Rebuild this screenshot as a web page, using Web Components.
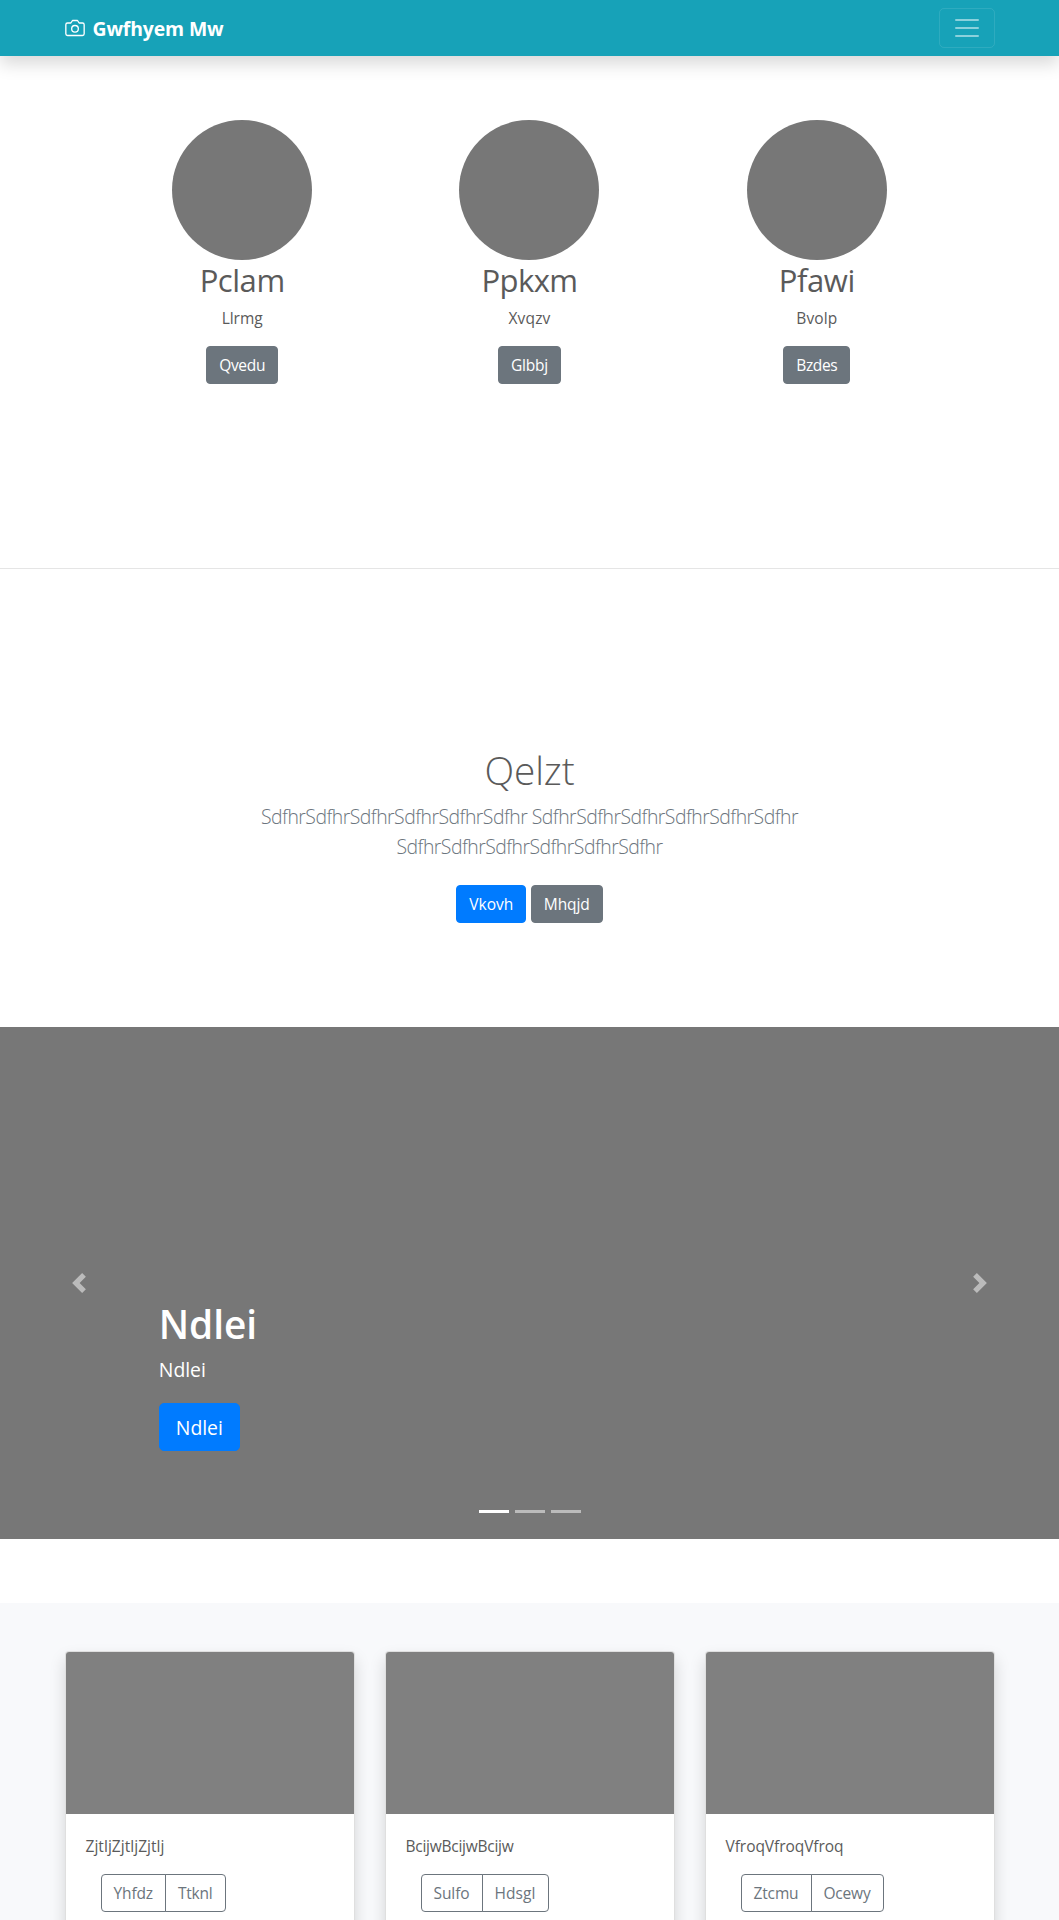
<!DOCTYPE html>
<html lang="en">
<head>
<meta charset="utf-8">
<meta name="viewport" content="width=device-width, initial-scale=1">
<title>Gwfhyem Mw</title>
<style>
html{overflow:hidden}
body{margin:0;height:1920px;overflow:hidden;background:#fff;color:#5a5a5a;font:400 16px/24px "Open Sans","Noto Sans",sans-serif}
</style>
</head>
<body>
<app-page></app-page>
<script>
const define = (name, html, setup) => {
  const template = document.createElement('template');
  template.innerHTML = html.trim();
  customElements.define(name, class extends HTMLElement {
    connectedCallback() {
      if (this.shadowRoot) return;
      this.attachShadow({ mode: 'open' }).append(template.content.cloneNode(true));
      if (setup) setup(this, this.shadowRoot);
    }
  });
};

/* A single line of text tracked to the advance width given in "w"; "drop" lowers its baseline slightly. */
define('fit-text', `<style>
:host{display:inline-block;white-space:nowrap;font-size:.97em;line-height:inherit;text-align:left;vertical-align:-.02em}
:host([drop]){vertical-align:-1.3px}
span{display:inline-block}
</style><span><slot></slot></span>`, (host, root) => {
  const span = root.querySelector('span');
  const w = +host.getAttribute('w');
  const natural = span.getBoundingClientRect().width;
  span.style.letterSpacing = (w - natural) / host.textContent.length + 'px';
});

define('ui-button', `
<style>
:host{display:inline-block;box-sizing:border-box;vertical-align:middle;height:38px;padding:6px 12px;border:1px solid #6c757d;border-radius:4px;background:#6c757d;color:#fff;font-size:16px;line-height:24px;white-space:nowrap}
:host([kind=primary]){background:#007bff;border-color:#007bff}
:host([kind=outline]){background:transparent;color:#6c757d}
:host([size=lg]){height:48px;padding:8px 16px;font-size:20px;line-height:30px;border-radius:5px}
:host([side=left]){border-radius:4px 0 0 4px}
:host([side=right]){border-radius:0 4px 4px 0;margin-left:-1px}
</style><slot></slot>`);

define('nav-bar', `
<style>
:host{display:block;position:relative;background:#17a2b8;height:56px;box-shadow:0 8px 16px rgba(0,0,0,.15)}
.in{box-sizing:border-box;width:960px;height:56px;margin:auto;padding:0 15px;display:flex;align-items:center;justify-content:space-between}
.brand{display:flex;align-items:center;color:#fff;font-size:20px;font-weight:700;line-height:30px}
.brand svg{margin-right:8px}
.brand fit-text{margin-top:2px}
.toggle{box-sizing:border-box;width:56px;height:40px;border:1px solid rgba(255,255,255,.1);border-radius:5px;padding:4px 12px}
svg{display:block}
</style>
<div class="in">
<div class="brand"><svg width="20" height="20" viewBox="0 0 24 24" fill="none" stroke="#fff" stroke-width="1.6" stroke-linecap="round" stroke-linejoin="round"><path d="M23 19a2 2 0 0 1-2 2H3a2 2 0 0 1-2-2V8a2 2 0 0 1 2-2h4l2-3h6l2 3h4a2 2 0 0 1 2 2z"/><circle cx="12" cy="13" r="4"/></svg><fit-text w="131">Gwfhyem Mw</fit-text></div>
<div class="toggle"><svg width="30" height="30" viewBox="0 0 30 30"><path stroke="rgba(255,255,255,.5)" stroke-width="2" stroke-linecap="round" d="M4 7h22M4 15h22M4 23h22"/></svg></div>
</div>`);

define('profile-item', `
<style>
:host{display:block;flex:1;text-align:center}
.dot{width:140px;height:140px;border-radius:50%;background:#777;margin:auto}
.h{font-size:32px;line-height:38.4px;margin-bottom:7.5px;height:38.4px;font-weight:400}
.p{height:24px;margin-bottom:16px}
</style>
<div class="dot"></div><div class="h"><slot name="title"></slot></div><div class="p"><slot name="text"></slot></div><slot></slot>`);

define('intro-block', `
<style>
:host{display:block;text-align:center;font-weight:300}
.h{font-size:40px;line-height:48px;height:48px;margin-bottom:8px}
.lead{font-size:20px;line-height:30px;color:#6c757d;margin-bottom:24px}
.line{height:30px}
.acts{display:flex;justify-content:center;gap:4.5px;font-weight:400}
</style>
<div class="h"><fit-text w="90">Qelzt</fit-text></div>
<div class="lead"><div class="line"><fit-text drop w="537">SdfhrSdfhrSdfhrSdfhrSdfhrSdfhr SdfhrSdfhrSdfhrSdfhrSdfhrSdfhr</fit-text></div><div class="line"><fit-text drop w="266">SdfhrSdfhrSdfhrSdfhrSdfhrSdfhr</fit-text></div></div>
<div class="acts"><ui-button kind="primary"><fit-text w="44">Vkovh</fit-text></ui-button><ui-button><fit-text w="46">Mhqjd</fit-text></ui-button></div>`);

define('hero-carousel', `
<style>
:host{display:grid;grid-template-columns:15% 1fr 15%;height:512px;background:#777;color:#fff}
.ctl{display:flex;align-items:center;justify-content:center;opacity:.5}
.main{display:flex;flex-direction:column;align-items:flex-start;justify-content:flex-end}
.h{font-size:40px;line-height:48px;height:48px;font-weight:600;margin-bottom:8px}
.p{font-size:20px;line-height:30px;height:30px;margin-bottom:18.6px}
.dots{align-self:center;display:flex;gap:6px;margin:59px 0 26px}
.dots i{width:30px;height:3px;background:#fff;opacity:.5}
.dots i:first-child{opacity:1}
</style>
<div class="ctl"><svg width="20" height="20" viewBox="0 0 8 8" fill="#fff"><path d="M5.25 0l-4 4 4 4 1.5-1.5-2.5-2.5 2.5-2.5-1.5-1.5z"/></svg></div>
<div class="main"><div class="h"><fit-text drop w="98">Ndlei</fit-text></div><div class="p"><fit-text w="47">Ndlei</fit-text></div><ui-button kind="primary" size="lg"><fit-text drop w="47">Ndlei</fit-text></ui-button><div class="dots"><i></i><i></i><i></i></div></div>
<div class="ctl"><svg width="20" height="20" viewBox="0 0 8 8" fill="#fff"><path d="M2.75 0l-1.5 1.5 2.5 2.5-2.5 2.5 1.5 1.5 4-4-4-4z"/></svg></div>`);

define('album-card', `
<style>
:host{display:block;box-sizing:border-box;flex:1;height:320px;background:#fff;border:1px solid rgba(0,0,0,.125);border-radius:4px;box-shadow:0 8px 16px rgba(0,0,0,.15)}
.pic{height:162px;background:#808080;border-radius:3px 3px 0 0}
.body{padding:20px}
.t{height:24px;margin-bottom:16px}
.g{display:flex;padding-left:15px}
</style>
<div class="pic"></div><div class="body"><div class="t"><slot name="text"></slot></div><div class="g"><slot></slot></div></div>`);

define('app-page', `
<style>
:host{display:block}
.people{display:flex;width:862px;height:320px;margin:64px auto 0}
hr{margin:128px 0 0;border:0;border-top:1px solid rgba(0,0,0,.1)}
intro-block{margin-top:176px}
hero-carousel{margin-top:104px}
.album{margin-top:64px;background:#f8f9fb;padding-top:48px;height:269px;overflow:hidden}
.row{width:930px;margin:auto;display:flex;gap:30px}
</style>
<nav-bar></nav-bar>
<div class="people">
<profile-item><fit-text slot="title" w="85">Pclam</fit-text><fit-text slot="text" w="41">Llrmg</fit-text><ui-button><fit-text w="46">Qvedu</fit-text></ui-button></profile-item>
<profile-item><fit-text slot="title" w="96">Ppkxm</fit-text><fit-text slot="text" w="42">Xvqzv</fit-text><ui-button><fit-text w="37">Glbbj</fit-text></ui-button></profile-item>
<profile-item><fit-text slot="title" w="76">Pfawi</fit-text><fit-text slot="text" w="41">Bvolp</fit-text><ui-button><fit-text w="41">Bzdes</fit-text></ui-button></profile-item>
</div>
<hr>
<intro-block></intro-block>
<hero-carousel></hero-carousel>
<div class="album"><div class="row">
<album-card><fit-text slot="text" w="79">ZjtljZjtljZjtlj</fit-text><ui-button kind="outline" side="left"><fit-text w="39.5">Yhfdz</fit-text></ui-button><ui-button kind="outline" side="right"><fit-text w="34.5">Ttknl</fit-text></ui-button></album-card>
<album-card><fit-text slot="text" w="108">BcijwBcijwBcijw</fit-text><ui-button kind="outline" side="left"><fit-text w="36">Sulfo</fit-text></ui-button><ui-button kind="outline" side="right"><fit-text w="41">Hdsgl</fit-text></ui-button></album-card>
<album-card><fit-text slot="text" w="118">VfroqVfroqVfroq</fit-text><ui-button kind="outline" side="left"><fit-text w="45">Ztcmu</fit-text></ui-button><ui-button kind="outline" side="right"><fit-text w="47">Ocewy</fit-text></ui-button></album-card>
</div></div>`);
</script>
</body>
</html>
